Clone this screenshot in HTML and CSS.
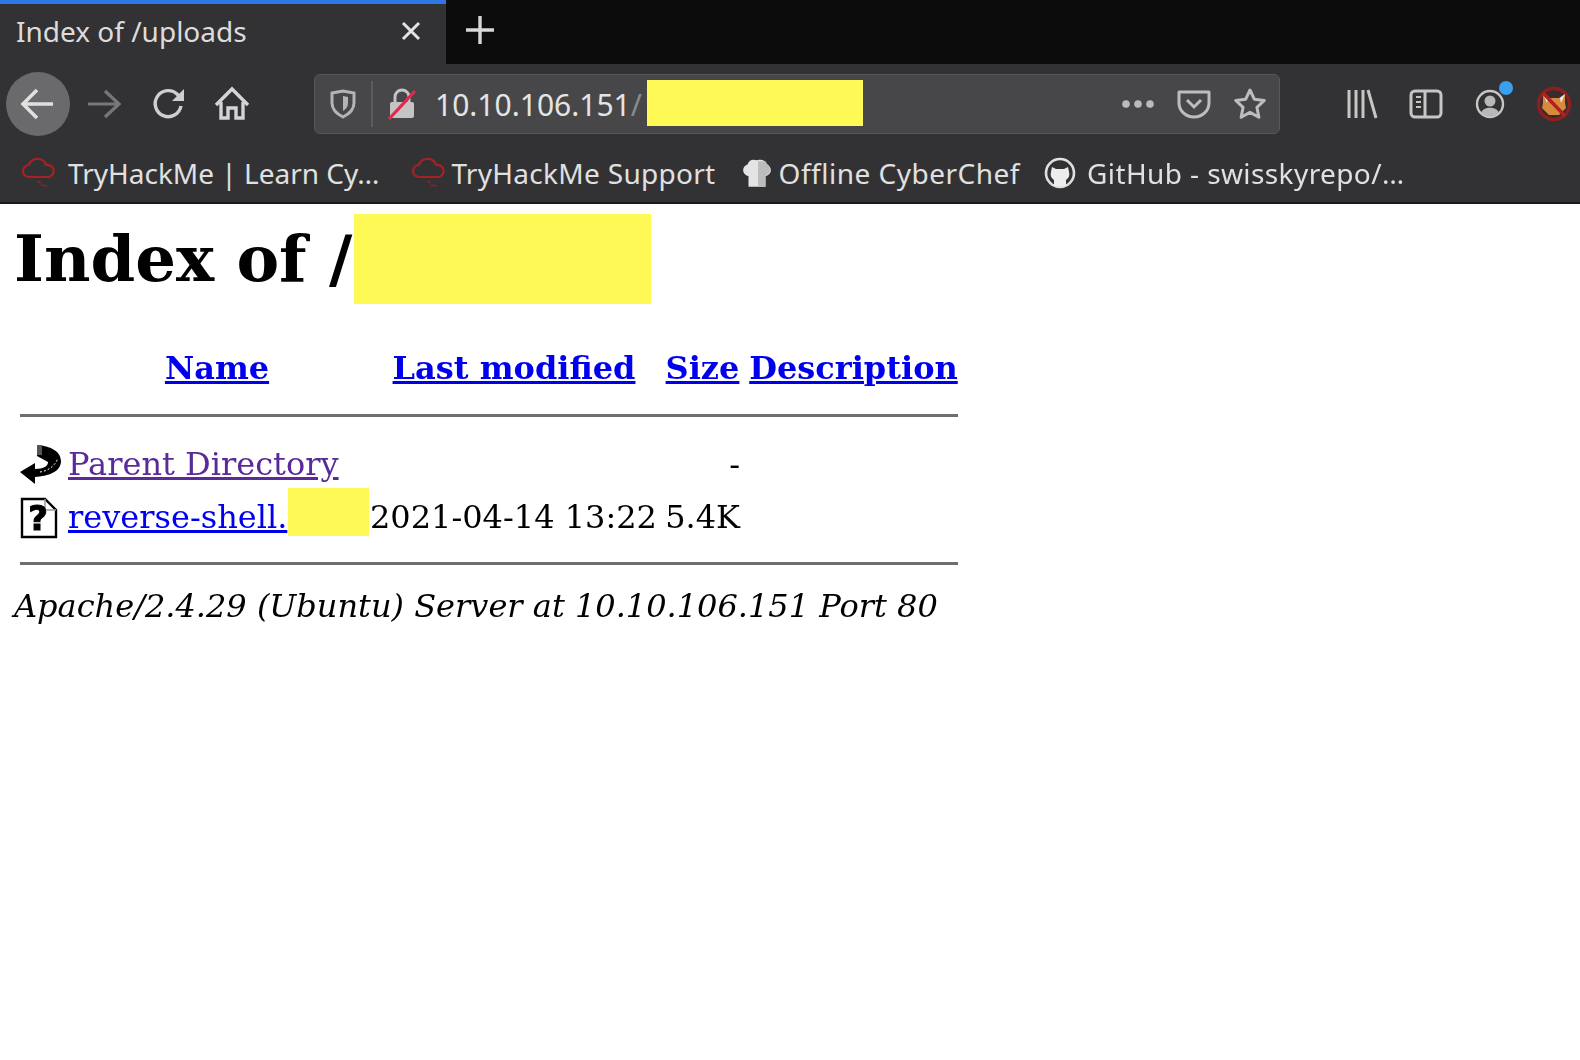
FILE: index.html
```html
<!DOCTYPE html>
<html lang="en">
<head>
  <meta charset="UTF-8" />
  <title>Index of /uploads</title>
  <link rel="stylesheet" href="styles.css">
</head>
<body>
  <header class="browser">
    <div class="tabstrip">
      <div class="tab">
        <span class="tab-title">Index of /uploads</span>
        <svg class="tab-close" width="22" height="22" viewBox="0 0 22 22"><path d="M3 3l16 16M19 3L3 19" stroke="#e4e4e4" stroke-width="3" fill="none"/></svg>
      </div>
      <div class="newtab">
        <svg width="32" height="32" viewBox="0 0 32 32"><path d="M16 2v28M2 16h28" stroke="#d8d8d8" stroke-width="3.4" fill="none"/></svg>
      </div>
    </div>

    <div class="toolbar">
      <div class="nav-btns">
        <div class="btn btn-back">
          <svg width="36" height="36" viewBox="0 0 36 36"><path d="M33 18H4M17 4L3 18l14 14" stroke="#e0e0e0" stroke-width="3.6" fill="none"/></svg>
        </div>
        <div class="btn">
          <svg width="36" height="36" viewBox="0 0 36 36"><path d="M2 18h30M19 5l14 13-14 13" stroke="#77777a" stroke-width="3.2" fill="none"/></svg>
        </div>
        <div class="btn">
          <svg width="36" height="36" viewBox="0 0 36 36"><path d="M31 20a13 13 0 1 1-3.500-11.500L32 13" stroke="#cfcfcf" stroke-width="3.400" fill="none"/><path d="M34 3v12H22z" fill="#cfcfcf"/></svg>
        </div>
        <div class="btn">
          <svg width="36" height="36" viewBox="0 0 36 36"><path d="M2 19L18 3l16 16M7 16v16h7V22h8v10h7V16" stroke="#d4d4d4" stroke-width="3.400" fill="none"/></svg>
        </div>
      </div>

      <div class="urlbar">
        <svg class="url-shield" width="28" height="30" viewBox="0 0 28 30"><path d="M3 4l11-2 11 2v10c0 7-5 11-11 14C8 25 3 21 3 14z" stroke="#b4b4b6" stroke-width="3" fill="none"/><path d="M14 7l5 1v6c0 4-2 6-5 8z" fill="#b4b4b6"/></svg>
        <span class="url-sep"></span>
        <svg class="url-lock" width="30" height="32" viewBox="0 0 30 32"><path d="M8 14V9a7 7 0 0 1 14 0v5" stroke="#c4c4c4" stroke-width="3" fill="none"/><rect x="3" y="14" width="24" height="16" rx="2" fill="#c4c4c4"/><path d="M2 31L28 3" stroke="#e22850" stroke-width="3.200"/></svg>
        <span class="url-text">10.10.106.151<span class="url-dim">/</span></span>
        <span class="redact redact-url"></span>
        <div class="url-actions">
          <svg width="34" height="10" viewBox="0 0 34 10"><circle cx="5" cy="5" r="3.800" fill="#bbb"/><circle cx="17" cy="5" r="3.800" fill="#bbb"/><circle cx="29" cy="5" r="3.800" fill="#bbb"/></svg>
          <svg width="34" height="30" viewBox="0 0 34 30"><path d="M2 3h30v11a15 14 0 0 1-30 0z" stroke="#bdbdbd" stroke-width="3" fill="none" stroke-linejoin="round"/><path d="M10 11l7 7 7-7" stroke="#bdbdbd" stroke-width="3" fill="none"/></svg>
          <svg width="34" height="34" viewBox="0 0 34 34"><path d="M17 3l4.300 9.200 10 1.200-7.400 6.900 2 10L17 25.400 8.100 30.300l2-10-7.400-6.900 10-1.200z" stroke="#bdbdbd" stroke-width="3" fill="none" stroke-linejoin="round"/></svg>
        </div>
      </div>

      <div class="tool-btns">
        <div class="btn">
          <svg width="32" height="30" viewBox="0 0 32 30"><path d="M3 1v28M10 1v28M17 1v28M22 1l8 28" stroke="#c6c6c6" stroke-width="3" fill="none"/></svg>
        </div>
        <div class="btn">
          <svg width="34" height="30" viewBox="0 0 34 30"><rect x="2" y="2" width="30" height="26" rx="4" stroke="#c6c6c6" stroke-width="3" fill="none"/><path d="M16 2v26" stroke="#c6c6c6" stroke-width="3"/><path d="M7 8h5M7 13h5M7 18h5" stroke="#c6c6c6" stroke-width="2"/></svg>
        </div>
        <div class="btn btn-account">
          <svg width="30" height="30" viewBox="0 0 30 30"><circle cx="15" cy="15" r="13" stroke="#c6c6c6" stroke-width="2.400" fill="none"/><circle cx="15" cy="12" r="5.500" fill="#b8b8b8"/><path d="M6 24c2-7 16-7 18 0-4 4-14 4-18 0z" fill="#b8b8b8"/></svg>
          <span class="account-dot"></span>
        </div>
        <div class="btn">
          <svg width="36" height="36" viewBox="0 0 36 36"><circle cx="18" cy="18" r="15.500" fill="#3a2c2c" stroke="#8c1f1f" stroke-width="3.400"/><path d="M7 8l6 4h10l6-4v9l1 5-7 7H13l-7-7 1-5z" fill="#d8893c"/><path d="M7 8l5 4-1 5zM29 8l-5 4 1 5z" fill="#eee"/><path d="M7 7l22 23" stroke="#b3211f" stroke-width="3.400"/></svg>
        </div>
      </div>
    </div>

    <div class="bookmarks">
      <div class="bm bm-first">
        <svg width="36" height="32" viewBox="0 0 36 32"><path d="M9 20a6 6 0 0 1 0-12 9 9 0 0 1 17 0 6 6 0 0 1 3 12z" stroke="#a82024" stroke-width="2.200" fill="none"/><path d="M17 24l4 2M21 28l6 1" stroke="#8e2024" stroke-width="1.600"/></svg>
        <span>TryHackMe | Learn Cy…</span>
      </div>
      <div class="bm bm-support">
        <svg width="36" height="32" viewBox="0 0 36 32"><path d="M9 20a6 6 0 0 1 0-12 9 9 0 0 1 17 0 6 6 0 0 1 3 12z" stroke="#a82024" stroke-width="2.200" fill="none"/><path d="M17 24l4 2M21 28l6 1" stroke="#8e2024" stroke-width="1.600"/></svg>
        <span>TryHackMe Support</span>
      </div>
      <div class="bm bm-chef">
        <svg width="34" height="32" viewBox="0 0 32 30"><path d="M8 28V18C2 17 1 9 7 7c2-5 5-5 9-4 5-1 8 0 9 4 6 2 5 10-1 11v10z" fill="#e4e4e4"/><path d="M17 4h7c2 4 5 4 4 10l-4 4v10h-7z" fill="#bcbcbc"/></svg>
        <span>Offline CyberChef</span>
      </div>
      <div class="bm bm-github">
        <svg width="32" height="32" viewBox="0 0 32 32"><circle cx="16" cy="16" r="14" stroke="#e0e0e0" stroke-width="2.600" fill="#333335"/><path d="M10 29v-6c-3-2-4-5-3-8l1-5 4 2h8l4-2 1 5c1 3 0 6-3 8v6z" fill="#ededed"/></svg>
        <span>GitHub - swisskyrepo/…</span>
      </div>
    </div>
  </header>

  <main class="listing">
    <h1>Index of /<span class="redact redact-title"></span></h1>
    <table>
      <tr>
        <th class="col-icon"></th>
        <th class="col-name"><a href="#">Name</a></th>
        <th class="col-date"><a href="#">Last modified</a></th>
        <th class="col-size"><a href="#">Size</a></th>
        <th class="col-desc"><a href="#">Description</a></th>
      </tr>
      <tr><th colspan="5"><hr class="hr-top"></th></tr>
      <tr class="row-parent">
        <td>
          <svg class="file-icon" width="42" height="40" viewBox="0 0 42 40"><path d="M0 28l15-9v6c9 0 13-3 13-7l-11-6V1c13 1 24 6 24 16 0 11-13 15-26 16v7z" fill="#000"/><path d="M17 1h5v10h-5z" fill="#555"/><path d="M20 28c8-1 15-6 18-14" stroke="#fff" stroke-width="1" stroke-dasharray="2 2" fill="none"/></svg>
        </td>
        <td><a href="#" class="visited">Parent Directory</a></td>
        <td></td>
        <td class="size">-</td>
        <td></td>
      </tr>
      <tr class="row-file">
        <td class="icon-cell">
          <svg class="file-icon" width="38" height="42" viewBox="0 0 38 42"><path d="M2 2h23l11 11v27H2z" stroke="#000" stroke-width="2.400" fill="#fff"/><path d="M25 2v11h11" stroke="#999" stroke-width="1.500" fill="none"/><text x="18" y="33" class="file-q">?</text></svg>
        </td>
        <td><a href="#">reverse-shell.</a><span class="redact redact-ext"></span></td>
        <td>2021-04-14 13:22</td>
        <td class="size">5.4K</td>
        <td></td>
      </tr>
      <tr><th colspan="5"><hr class="hr-bottom"></th></tr>
    </table>
    <address>Apache/2.4.29 (Ubuntu) Server at 10.10.106.151 Port 80</address>
  </main>
</body>
</html>
```

FILE: styles.css
```css
* {
  box-sizing: border-box;
}
body {
  margin: 0;
  background: #fff;
  color: #000;
  font-family: "DejaVu Serif", serif;
  overflow: hidden;
  filter: blur(0.7px);
}
svg {
  display: block;
  flex: none;
}
.redact {
  display: inline-block;
  background: #fff955;
}

/* browser chrome */
.browser {
  font-family: "Noto Sans", sans-serif;
  color: #e6e6e6;
  background: #323234;
}
.tabstrip {
  display: flex;
  height: 64px;
  background: #0c0c0d;
}
.tab {
  display: flex;
  align-items: center;
  justify-content: space-between;
  width: 446px;
  padding: 0 24px 0 16px;
  background: #323234;
  border-top: 4px solid #2f78e4;
  font-size: 28px;
}
.tab-title {
  color: #dcdcdc;
  margin-top: -6px;
}
.tab-close {
  margin-top: -6px;
}
.newtab {
  padding: 14px 0 0 18px;
}
.toolbar {
  display: flex;
  align-items: center;
  height: 80px;
  padding-left: 6px;
  overflow: hidden;
}
.nav-btns, .tool-btns {
  display: flex;
  flex: none;
}
.btn {
  display: flex;
  flex: none;
  align-items: center;
  justify-content: center;
  width: 64px;
  height: 64px;
}
.btn-back {
  margin-right: 2px;
  background: #6a6a6c;
  border-radius: 50%;
}
.btn-account {
  position: relative;
}
.account-dot {
  position: absolute;
  top: 9px;
  right: 9px;
  width: 14px;
  height: 14px;
  border-radius: 50%;
  background: #3aa0ee;
}
.urlbar {
  display: flex;
  flex: none;
  align-items: center;
  width: 966px;
  height: 60px;
  margin-left: 50px;
  padding-left: 14px;
  background: #474749;
  border: 1px solid #575759;
  border-radius: 6px;
}
.url-sep {
  width: 2px;
  height: 46px;
  margin: 0 14px;
  background: #5c5c5e;
}
.url-text {
  margin-left: 18px;
  font-size: 30px;
  color: #e4e4e4;
}
.url-dim {
  color: #8a8a8c;
}
.redact-url {
  width: 216px;
  height: 46px;
  margin: 0 0 2px 5px;
}
.url-actions {
  display: flex;
  align-items: center;
  gap: 22px;
  margin-left: auto;
  padding-right: 12px;
}
.tool-btns {
  margin-left: 50px;
}
.bookmarks {
  display: flex;
  align-items: center;
  height: 60px;
  padding-left: 20px;
  border-bottom: 2px solid #1a1a1b;
}
.bm {
  display: flex;
  align-items: center;
  font-size: 28px;
  letter-spacing: 0.4px;
  color: #e0e0e0;
  white-space: nowrap;
}
.bm-first {
  gap: 12px;
  margin-right: 31px;
  letter-spacing: 0;
}
.bm-support {
  gap: 5px;
  margin-right: 24px;
  letter-spacing: 0.3px;
}
.bm-chef {
  gap: 5px;
  margin-right: 24px;
  letter-spacing: 0.5px;
}
.bm-github {
  gap: 11px;
}

/* directory listing */
.listing {
  padding: 0 14px;
}
h1 {
  display: flex;
  align-items: center;
  margin: 10px 0 41px;
  font-size: 64px;
  line-height: 90px;
}
.redact-title {
  width: 297px;
  height: 90px;
  margin-left: 2px;
}
table {
  table-layout: fixed;
  width: 946px;
  margin-left: 2px;
  border-spacing: 4px;
  font-size: 32px;
}
th, td {
  padding: 0;
  white-space: nowrap;
}
.row-parent td {
  height: 40px;
  vertical-align: middle;
}
.row-file td {
  vertical-align: baseline;
}
.row-file .icon-cell {
  vertical-align: top;
}
.icon-cell svg {
  margin: 9px 0 -3px;
}
.col-icon { width: 44px; }
.col-name { width: 298px; }
.col-date { width: 288px; }
.col-size { width: 83px; padding-right: 2px; }
.col-desc { width: 209px; }
a {
  color: #0000ee;
}
a.visited {
  color: #5a2a98;
}
hr {
  height: 3px;
  border: 0;
  background: #6e6e6e;
}
.hr-top {
  margin: 23px 0;
}
.hr-bottom {
  margin: 22px 0 0;
}
.redact-ext {
  width: 81px;
  height: 48px;
  margin-left: 1px;
  vertical-align: -8px;
}
.file-q {
  font-family: "DejaVu Sans", sans-serif;
  font-size: 34px;
  font-weight: bold;
  stroke: #000;
  stroke-width: 1;
  text-anchor: middle;
}
.size {
  padding-right: 5px;
  text-align: right;
}
address {
  margin-top: 18px;
  font-size: 32px;
  font-style: italic;
}
```
